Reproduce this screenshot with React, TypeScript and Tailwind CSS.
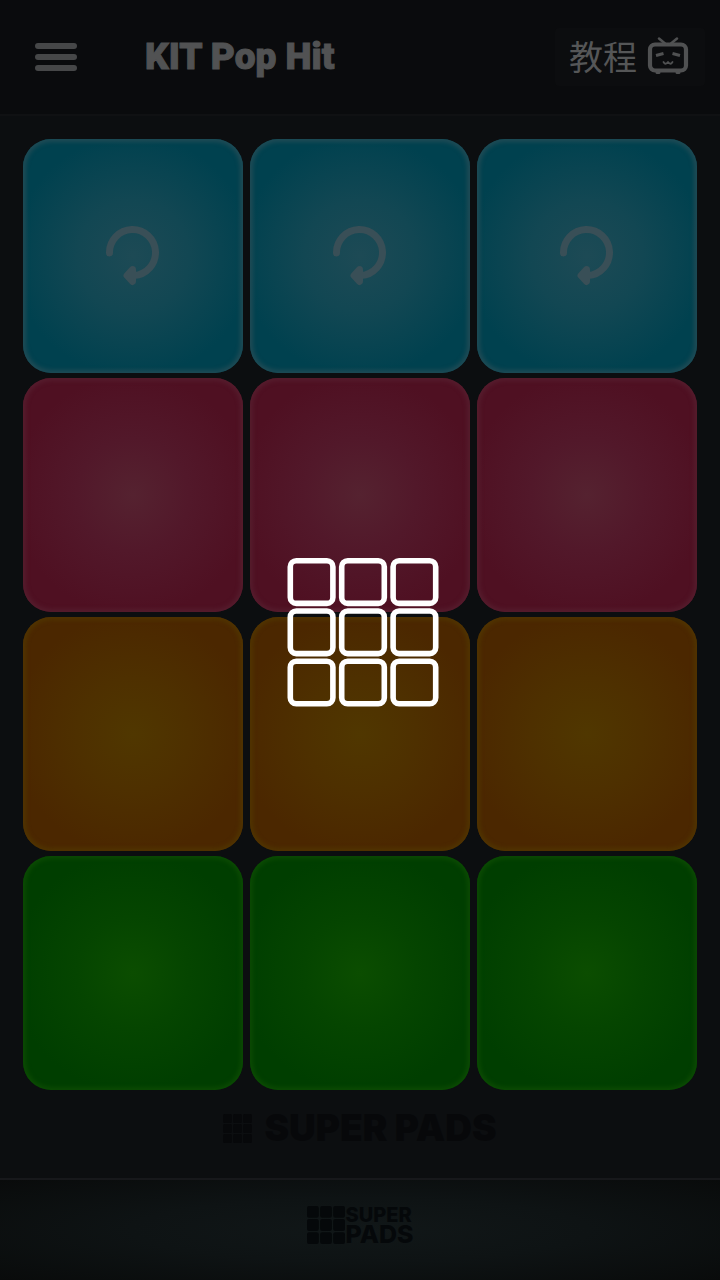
const rows = [
  {
    color: "cyan",
    loop: true,
    face: "bg-[radial-gradient(circle_at_50%_50%,#1d4a55_0%,#124753_35%,#00414f_75%)]",
    edge: "shadow-[inset_0_0_4px_3px_#1f4b55]"
  },
  {
    color: "pink",
    loop: false,
    face: "bg-[radial-gradient(circle_at_50%_50%,#552230_0%,#52182a_35%,#4f1022_75%)]",
    edge: "shadow-[inset_0_0_4px_3px_#551c2d]"
  },
  {
    color: "orange",
    loop: false,
    face: "bg-[radial-gradient(circle_at_50%_50%,#503700_0%,#4e3000_35%,#4b2700_75%)]",
    edge: "shadow-[inset_0_0_4px_3px_#503400]"
  },
  {
    color: "green",
    loop: false,
    face: "bg-[radial-gradient(circle_at_50%_50%,#0b4d00_0%,#054500_35%,#003e00_75%)]",
    edge: "shadow-[inset_0_0_4px_3px_#0b4a03]"
  }
];

const cells = [0, 1, 2];

const LoopIcon = () => (
  <svg viewBox="0 0 54 60" className="h-[60px] w-[54px]" fill="none" aria-hidden="true">
    <path
      d="M3.5 27 A23 23 0 1 1 28 49.5"
      stroke="#394f57"
      strokeWidth="7"
      strokeLinecap="round"
    />
    <path
      d="M26.5 43.5 L21 49.5 L26.5 55.5 Z"
      fill="#394f57"
      stroke="#394f57"
      strokeWidth="7"
      strokeLinecap="round"
      strokeLinejoin="round"
    />
  </svg>
);

const TvIcon = () => (
  <svg
    viewBox="0 0 42 38"
    className="h-[38px] w-[42px]"
    fill="none"
    stroke="#505152"
    strokeLinecap="round"
    strokeLinejoin="round"
    aria-hidden="true"
  >
    <rect x="3" y="7.5" width="36" height="26" rx="5" strokeWidth="4.2" />
    <path d="M12 1.5 L18 6.5 M30 1.5 L24 6.5" strokeWidth="2.5" />
    <path d="M9 18.5 L16.5 16.5 M25.5 16.5 L33 18.5" strokeWidth="3" strokeLinecap="butt" />
    <path d="M16.5 25 Q18.5 28.5 21 25 Q23.5 28.5 25.5 25" strokeWidth="1.8" />
    <path d="M10 35.5 H12 M30 35.5 H32" strokeWidth="3" />
  </svg>
);

const GridMark = ({ className }: { className: string }) => (
  <svg viewBox="0 0 29 29" className={className} fill="currentColor" aria-hidden="true">
    {cells.map((y) =>
      cells.map((x) => (
        <rect key={`${x}-${y}`} x={x * 10} y={y * 10} width="9" height="9" rx="1.5" />
      ))
    )}
  </svg>
);

const Header = () => (
  <header className="flex h-[116px] items-center border-b-2 border-[#101113] bg-[#0a0b0d] pr-[15px] pl-[35px]">
    <button type="button" aria-label="Menu" className="flex w-[42px] flex-col gap-[5px]">
      {cells.map((bar) => (
        <span key={bar} className="h-[6px] w-full rounded-full bg-[#464748]" />
      ))}
    </button>
    <h1 className="ml-[68px] font-['Roboto'] text-[37px] leading-[48px] font-black text-[#515253] [-webkit-text-stroke:1px_#515253]">
      KIT Pop Hit
    </h1>
    <button
      type="button"
      className="ml-auto flex h-[58px] items-center gap-[10px] rounded-sm bg-[#0c0d0f] pr-4 pb-[2px] pl-[14px] font-['Noto_Sans_CJK_SC',sans-serif] text-[34px] leading-[48px] text-[#555657]"
    >
      教程
      <TvIcon />
    </button>
  </header>
);

const Loader = () => (
  <div
    role="status"
    aria-label="Loading"
    className="absolute inset-0 flex items-center justify-center pb-[14px] pl-[6px]"
  >
    <svg
      viewBox="0 0 152 150"
      className="h-[150px] w-[152px]"
      fill="none"
      stroke="white"
      strokeWidth="5.6"
    >
      {cells.map((y) =>
        cells.map((x) => (
          <rect
            key={`${x}-${y}`}
            x={3.3 + x * 51.4}
            y={2.8 + y * 50.2}
            width="42.6"
            height="42.6"
            rx="6"
          />
        ))
      )}
    </svg>
  </div>
);

const App = () => {
  return (
    <div className="relative flex min-h-screen flex-col bg-[#0c0e10]">
      <Header />

      <main className="flex flex-1 flex-col px-[23px] pt-[23px]">
        <div className="grid grid-cols-3 gap-x-[7px] gap-y-[5px]">
          {rows.map((row) =>
            cells.map((cell) => (
              <button
                key={`${row.color}-${cell}`}
                type="button"
                aria-label={`${row.color} pad ${cell + 1}`}
                className={`flex h-[234px] items-center justify-center rounded-[28px] ${row.face} ${row.edge}`}
              >
                {row.loop && <LoopIcon />}
              </button>
            ))
          )}
        </div>
        <div className="flex flex-1 items-center justify-center gap-3 pb-3 font-['Inter'] text-[37px] leading-[48px] font-black text-[#07080a]">
          <GridMark className="h-[29px] w-[29px]" />
          <span>SUPER PADS</span>
        </div>
      </main>

      <footer className="flex h-[102px] items-center justify-center gap-px border-t-2 border-[#17181b] bg-[radial-gradient(ellipse_at_50%_50%,#111718_0%,#0e1314_45%,#090b0b_100%)] pb-[10px] text-[#05080a]">
        <GridMark className="h-[38px] w-[38px]" />
        <div className="font-['Inter'] font-extrabold">
          <div className="text-[20px] leading-[19px]">SUPER</div>
          <div className="text-[25px] leading-[19px]">PADS</div>
        </div>
      </footer>

      <Loader />
    </div>
  );
};

export default App;
